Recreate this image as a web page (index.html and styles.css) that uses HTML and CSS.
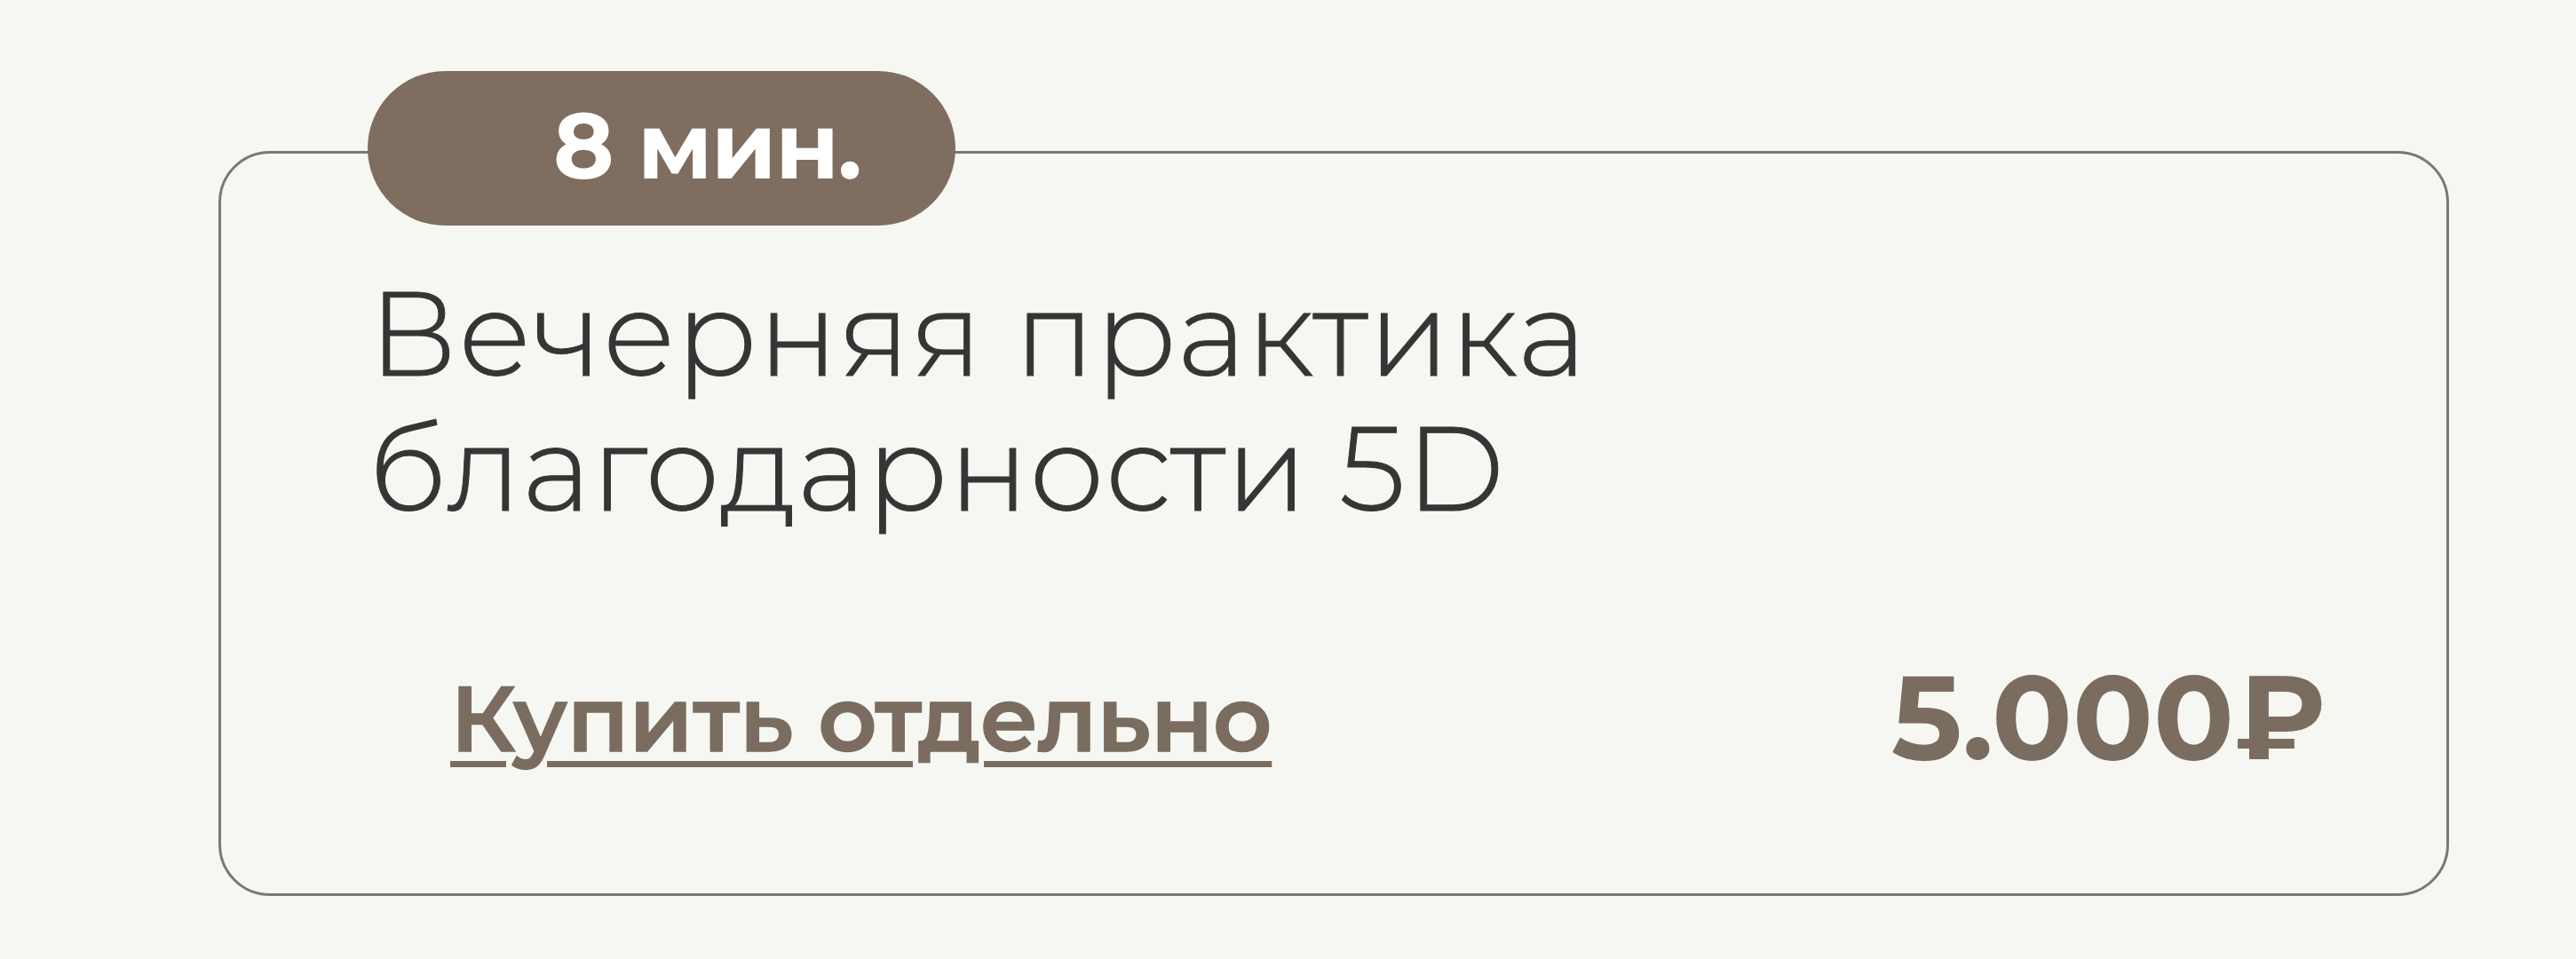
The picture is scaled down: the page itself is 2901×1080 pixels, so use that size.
FILE: index.html
```html
<!DOCTYPE html>
<html lang="ru">
<head>
<meta charset="utf-8">
<title>Вечерняя практика</title>
<link rel="stylesheet" href="styles.css">
</head>
<body>
<article class="card">
  <div class="badge">8 мин.</div>
  <h2 class="title"><span class="line">Вечерняя практика</span><span class="line">благодарности 5D</span></h2>
  <div class="footer">
    <a class="buy" href="#">Купить отдельно</a>
    <span class="price">5.000₽</span>
  </div>
</article>
</body>
</html>
```

FILE: styles.css
```css
* { box-sizing: border-box; }
body {
  margin: 0;
  height: 1080px;
  padding: 170px 143px 71px 246px;
  background: #f6f7f2;
  font-family: "Montserrat", "Inter", "Open Sans", sans-serif;
  overflow: hidden;
}
.card {
  position: relative;
  height: 839px;
  padding: 126px 135px 0 166px;
  border: 3px solid #7f7670;
  border-radius: 58px;
}
.badge {
  position: absolute;
  left: 165px;
  top: -93px;
  width: 662px;
  height: 174px;
  padding: 0 107px 8px 0;
  display: flex;
  align-items: center;
  justify-content: flex-end;
  border-radius: 87px;
  background: #7f6d60;
  color: #fff;
  font-size: 104px;
  font-weight: 700;
  letter-spacing: -1.7px;
  white-space: nowrap;
}
.title {
  margin: 0;
  color: #333634;
  font-size: 134px;
  font-weight: 300;
  line-height: 152px;
  letter-spacing: 0.85px;
  -webkit-text-stroke: 1px #333634;
}
.line { display: block; white-space: nowrap; }
.footer {
  display: flex;
  justify-content: space-between;
  align-items: flex-start;
  margin-top: 137px;
  padding-left: 92px;
  color: #7a6d60;
  line-height: 134px;
  white-space: nowrap;
}
.buy {
  margin-top: 2px;
  color: inherit;
  font-size: 103px;
  font-weight: 600;
  letter-spacing: -0.35px;
  -webkit-text-stroke: 1.5px #7a6d60;
  text-decoration: underline;
  text-decoration-thickness: 7px;
  text-underline-offset: 11px;
}
.price { font-size: 134px; font-weight: 700; }
```
